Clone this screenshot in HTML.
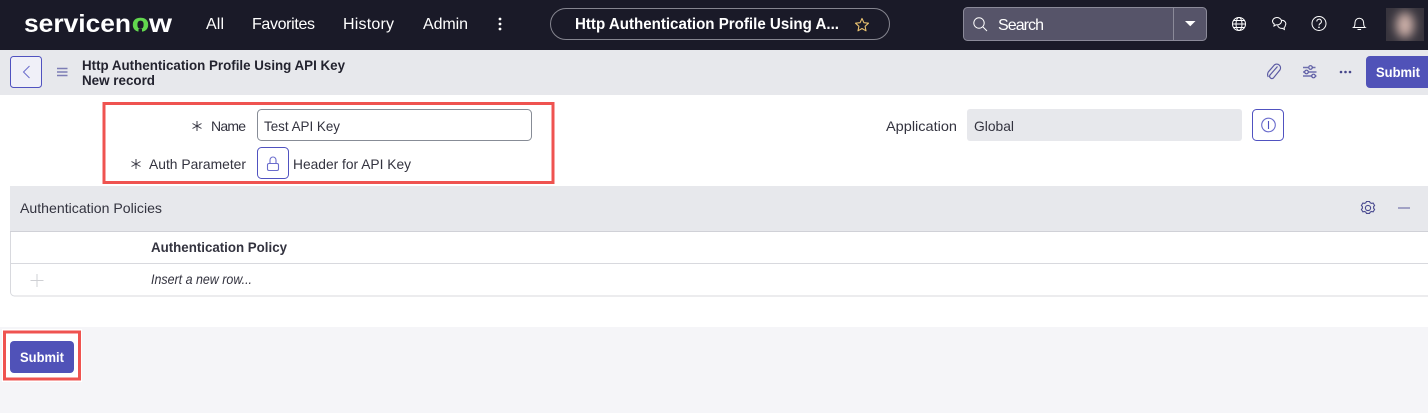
<!DOCTYPE html>
<html lang="en">
<head>
<meta charset="utf-8">
<title>Http Authentication Profile Using API Key</title>
<style>
html,body{margin:0;padding:0;width:1428px;height:413px;overflow:hidden;background:#fff}
svg{display:block;position:absolute;left:0;top:0}
text{font-family:"Liberation Sans",Arial,sans-serif;font-size:14px;fill:#33333f}
.nav{font-size:16px;fill:#fff}
.b{font-weight:bold}
</style>
</head>
<body>
<svg width="1428" height="413" viewBox="0 0 1428 413" xmlns="http://www.w3.org/2000/svg">
<defs><filter id="bl" x="-50%" y="-50%" width="200%" height="200%"><feGaussianBlur stdDeviation="5"/></filter>
<clipPath id="av"><rect x="1386" y="8" width="38" height="33"/></clipPath></defs>

<!-- backgrounds -->
<rect x="0" y="0" width="1428" height="50" fill="#1a1a28"/>
<rect x="0" y="50" width="1428" height="45" fill="#e7e8ec"/>
<rect x="0" y="327" width="1428" height="86" fill="#f5f5f8"/>

<!-- logo -->
<text x="24" y="32" textLength="107" lengthAdjust="spacingAndGlyphs" class="b" style="font-size:25px;fill:#fff">servicen</text>
<text x="132" y="31.500" textLength="17" lengthAdjust="spacingAndGlyphs" class="b" style="font-size:25px;fill:#62d84e;stroke:#62d84e;stroke-width:.5">o</text>
<text x="149" y="32" textLength="23" lengthAdjust="spacingAndGlyphs" class="b" style="font-size:25px;fill:#fff">w</text>
<rect x="138.500" y="29" width="3.500" height="4" fill="#1a1a28"/>

<!-- nav -->
<text class="nav" x="206" y="29" textLength="18">All</text>
<text class="nav" x="252" y="29" textLength="63">Favorites</text>
<text class="nav" x="343" y="29" textLength="51">History</text>
<text class="nav" x="423" y="29" textLength="45">Admin</text>
<circle cx="500" cy="19" r="1.400" fill="#fff"/><circle cx="500" cy="24" r="1.400" fill="#fff"/><circle cx="500" cy="29" r="1.400" fill="#fff"/>

<!-- pill -->
<rect x="550.500" y="8.500" width="339" height="31" rx="15.500" fill="none" stroke="#85858f"/>
<text class="b" x="575" y="29" textLength="264" lengthAdjust="spacingAndGlyphs" style="font-size:16px;fill:#fff">Http Authentication Profile Using A...</text>
<path d="M862 18.500l1.900 4.200 4.600.5-3.400 3.100.9 4.500-4-2.300-4 2.300.9-4.500-3.400-3.100 4.600-.5z" fill="none" stroke="#e8c170" stroke-width="1.100" stroke-linejoin="round"/>

<!-- search -->
<rect x="963.500" y="7.500" width="243" height="33" rx="4" fill="#565469" stroke="#8b8a99"/>
<line x1="1173.500" y1="8" x2="1173.500" y2="40" stroke="#8b8a99"/>
<circle cx="979" cy="23" r="5.200" fill="none" stroke="#fff" stroke-width="1"/>
<line x1="983" y1="27" x2="987" y2="31" stroke="#fff" stroke-width="1"/>
<text x="998" y="30" textLength="46" style="font-size:16px;fill:#fff">Search</text>
<path d="M1185 21h10.500l-5.250 5.200z" fill="#fff"/>

<!-- header icons -->
<g fill="none" stroke="#fff" stroke-width="1">
<circle cx="1239" cy="24" r="6.500"/>
<ellipse cx="1239" cy="24" rx="3" ry="6.500"/>
<path d="M1232.500 24h13M1233.500 20.500h11M1233.500 27.500h11"/>
<path d="M1272.500 21.500a4.500 3.800 0 0 1 9 -.4a4.500 3.800 0 0 1-5.500 3.700l-2 1.200.3-2a3.800 3.800 0 0 1-1.800-2.500z"/>
<path d="M1281.500 20.300a4 3.500 0 0 1 3.900 5 3.500 3.500 0 0 1-1.300 2.300l.3 1.900-2.200-1.200a4.500 4.500 0 0 1-4.600-2.800"/>
<circle cx="1319" cy="23.500" r="7"/>
<path d="M1316.800 21.500a2.300 2.300 0 1 1 3.400 2c-.9.500-1.200 1-1.200 2"/>
<path d="M1353.500 27.500c1.500-1 1.500-3 1.500-5a4.300 4.300 0 0 1 8.600 0c0 2 0 4 1.500 5z"/>
<path d="M1357.500 29.500h3.600"/>
</g>
<circle cx="1319" cy="27.300" r=".8" fill="#fff"/>

<!-- avatar -->
<g clip-path="url(#av)">
<rect x="1386" y="8" width="38" height="33" fill="#37343d"/>
<ellipse cx="1405" cy="25" rx="9" ry="13" fill="#cdb0a9" filter="url(#bl)"/>
</g>

<!-- subheader -->
<rect x="10.500" y="56.500" width="31" height="31" rx="3" fill="#f0f0f8" stroke="#5052c0"/>
<path d="M29.500 66l-6 6 6 6" fill="none" stroke="#6a6ccc" stroke-width="1"/>
<path d="M57 68.500h10.500M57 72h10.500M57 75.500h10.500" stroke="#7d7db5" stroke-width="1.500"/>
<text x="82" y="70" textLength="263" lengthAdjust="spacingAndGlyphs" style="fill:#23232f;font-weight:bold;font-size:14px">Http Authentication Profile Using API Key</text>
<text x="82" y="85" textLength="73" lengthAdjust="spacingAndGlyphs" style="fill:#23232f;font-weight:bold;font-size:14px">New record</text>

<g fill="none" stroke="#5b5aa3" stroke-width="1.200">
<path d="M1277.500 66.500l-7.500 8.500a2.300 2.300 0 0 0 3.400 3l6.500-8a3.800 3.800 0 0 0-5.600-5l-6 7a5 5 0 0 0 0 5"/>
<path d="M1303 67.500h5M1312 67.500h3.500M1303 72h1.500M1308.500 72h8M1303 76h9.500M1315.500 76h1" stroke="#6f6fae" stroke-width="1.500"/>
<circle cx="1310.500" cy="67.500" r="1.800"/><circle cx="1306.500" cy="72" r="1.800"/><circle cx="1313.500" cy="76" r="1.800"/>
</g>
<circle cx="1341" cy="72" r="1.300" fill="#45458a"/><circle cx="1345.500" cy="72" r="1.300" fill="#45458a"/><circle cx="1350" cy="72" r="1.300" fill="#45458a"/>

<path d="M1428 56h-58a4 4 0 0 0-4 4v24a4 4 0 0 0 4 4h58z" fill="#5052b8"/>
<text class="b" x="1376" y="77" textLength="44" lengthAdjust="spacingAndGlyphs" style="fill:#fff;font-size:14px">Submit</text>

<!-- form -->
<rect x="104" y="103.500" width="449" height="79" fill="none" stroke="#ef5350" stroke-width="3"/>
<g stroke="#3a3a46" stroke-width="1" fill="none">
<path d="M197 121v10M192.500 123.500l9 5M192.500 128.500l9-5"/>
<path d="M136 159v10M131.500 161.500l9 5M131.500 166.500l9-5"/>
</g>
<text x="211" y="131" textLength="35">Name</text>
<text x="149" y="169" textLength="97" lengthAdjust="spacingAndGlyphs">Auth Parameter</text>
<rect x="257.500" y="109.500" width="274" height="31" rx="4" fill="#fff" stroke="#878c96"/>
<text x="264" y="131" textLength="76" lengthAdjust="spacingAndGlyphs">Test API Key</text>
<rect x="257.500" y="147.500" width="31" height="31" rx="4" fill="#fff" stroke="#5052c0"/>
<rect x="267.500" y="163.500" width="11" height="7" rx="1.500" fill="none" stroke="#6a6ccc" stroke-width="1.100"/>
<path d="M270 163.500v-3.500a3 3 0 0 1 6 0v3.500" fill="none" stroke="#6a6ccc" stroke-width="1.100"/>
<text x="293" y="169" textLength="118" lengthAdjust="spacingAndGlyphs">Header for API Key</text>

<text x="886" y="131" textLength="71" lengthAdjust="spacingAndGlyphs">Application</text>
<rect x="967" y="109" width="275" height="32" rx="3" fill="#e7e8ec"/>
<text x="974" y="131" textLength="40" lengthAdjust="spacingAndGlyphs">Global</text>
<rect x="1252.500" y="109.500" width="31" height="31" rx="4" fill="#fff" stroke="#5052c0"/>
<circle cx="1268.500" cy="125" r="6.800" fill="none" stroke="#6a6ccc" stroke-width="1.100"/>
<line x1="1268.500" y1="121" x2="1268.500" y2="129" stroke="#5052c0" stroke-width="1.100"/>

<!-- section -->
<rect x="10" y="186" width="1418" height="45" fill="#e7e8ec"/>
<text x="20" y="213" textLength="142" lengthAdjust="spacingAndGlyphs">Authentication Policies</text>
<circle cx="1368" cy="208" r="2.600" fill="none" stroke="#4a4a90" stroke-width="1.100"/>
<path d="M1366.500 201.500h3l.7 1.300 1.500.6 1.400-.4 1.500 2.500-1 1.100v1.700l1 1.100-1.500 2.500-1.400-.4-1.500.6-.7 1.300h-3l-.7-1.300-1.500-.6-1.400.4-1.500-2.500 1-1.100v-1.700l-1-1.100 1.500-2.500 1.400.4 1.500-.6z" fill="none" stroke="#4a4a90" stroke-width="1.100"/>
<line x1="1398" y1="208" x2="1410" y2="208" stroke="#8a8ab8" stroke-width="1.500"/>

<!-- table -->
<path d="M10.500 231v61a4 4 0 0 0 4 4H1428" fill="none" stroke="#d8d9de"/>
<line x1="10" y1="231.500" x2="1428" y2="231.500" stroke="#d0d1d7"/>
<line x1="10" y1="263.500" x2="1428" y2="263.500" stroke="#d8d9de"/>
<text class="b" x="151" y="252" textLength="136" lengthAdjust="spacingAndGlyphs">Authentication Policy</text>
<path d="M37 274v13M30.500 280.500h13" stroke="#cfd0d4" stroke-width="1"/>
<text x="151" y="284" textLength="101" lengthAdjust="spacingAndGlyphs" style="font-style:italic">Insert a new row...</text>

<!-- bottom submit -->
<rect x="2" y="329" width="80" height="53" fill="#fff"/>
<rect x="4.500" y="332" width="75" height="47" fill="none" stroke="#ef5350" stroke-width="3"/>
<rect x="10" y="341" width="64" height="32" rx="4" fill="#5052b8"/>
<text class="b" x="20" y="362" textLength="44" lengthAdjust="spacingAndGlyphs" style="fill:#fff;font-size:14px">Submit</text>
</svg>
</body>
</html>
